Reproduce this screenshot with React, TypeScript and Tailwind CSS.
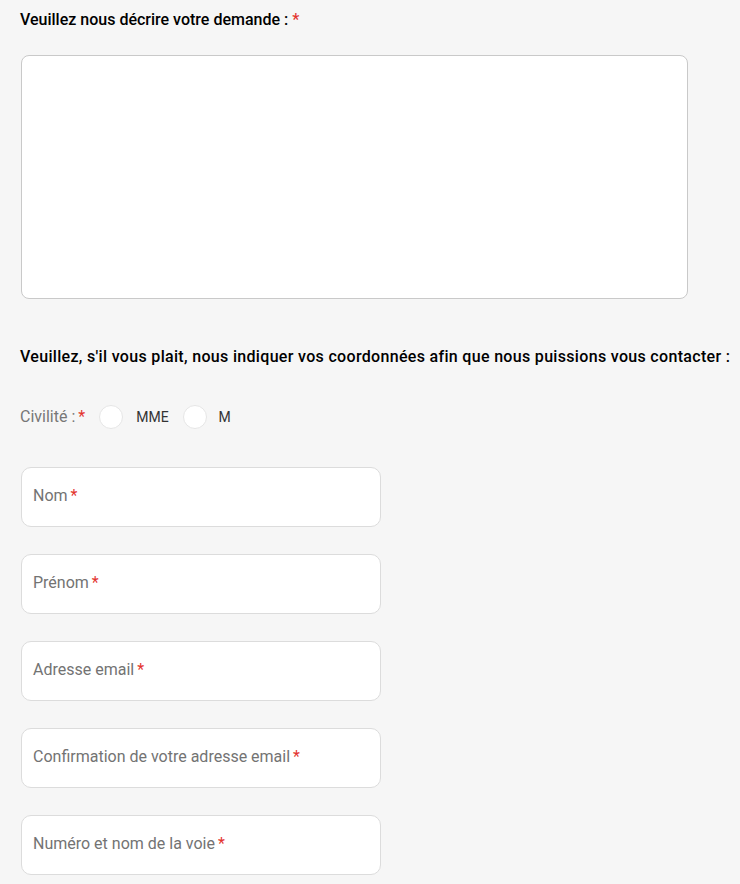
const fields = [
  "Nom",
  "Prénom",
  "Adresse email",
  "Confirmation de votre adresse email",
  "Numéro et nom de la voie",
];

function Star() {
  return <span className="text-[#e3342f] ml-[3px]">*</span>;
}

export default function App() {
  return (
    <div className="min-h-screen bg-[#f6f6f6] font-['Roboto',sans-serif] pl-[21px] pt-[9px]">
      {/* Demande */}
      <p className="text-[16px] font-medium text-black leading-[21px] -ml-px">
        Veuillez nous décrire votre demande :<span className="text-[#e3342f] ml-[4px]">*</span>
      </p>
      <textarea className="block mt-[25px] w-[667px] h-[244px] bg-white border border-[#c9c9c9] rounded-[8px] resize-none outline-none" />

      {/* Coordonnées */}
      <p className="mt-[47px] text-[16px] font-medium tracking-[0.32px] text-black leading-[21px] -ml-px">
        Veuillez, s'il vous plait, nous indiquer vos coordonnées afin que nous puissions vous contacter :
      </p>

      <div className="mt-[38px] flex items-center h-[24px] text-[16px]">
        <span className="text-[#777777] -ml-px">
          Civilité :<span className="text-[#e3342f] ml-[3px]">*</span>
        </span>
        <span className="ml-[14px] w-[24px] h-[24px] rounded-full bg-white border border-[#e6e6e6]" />
        <span className="ml-[13px] text-[14px] text-[#333333]">MME</span>
        <span className="ml-[14px] w-[24px] h-[24px] rounded-full bg-white border border-[#e6e6e6]" />
        <span className="ml-[12px] text-[14px] text-[#333333]">M</span>
      </div>

      <div className="mt-[38px] flex flex-col gap-[27px]">
        {fields.map((f) => (
          <div
            key={f}
            className="w-[360px] h-[60px] bg-white border border-[#dcdcdc] rounded-[10px] px-[11px] flex items-center pb-[2px] text-[16px] text-[#737373]"
          >
            {f}
            <Star />
          </div>
        ))}
      </div>
    </div>
  );
}
